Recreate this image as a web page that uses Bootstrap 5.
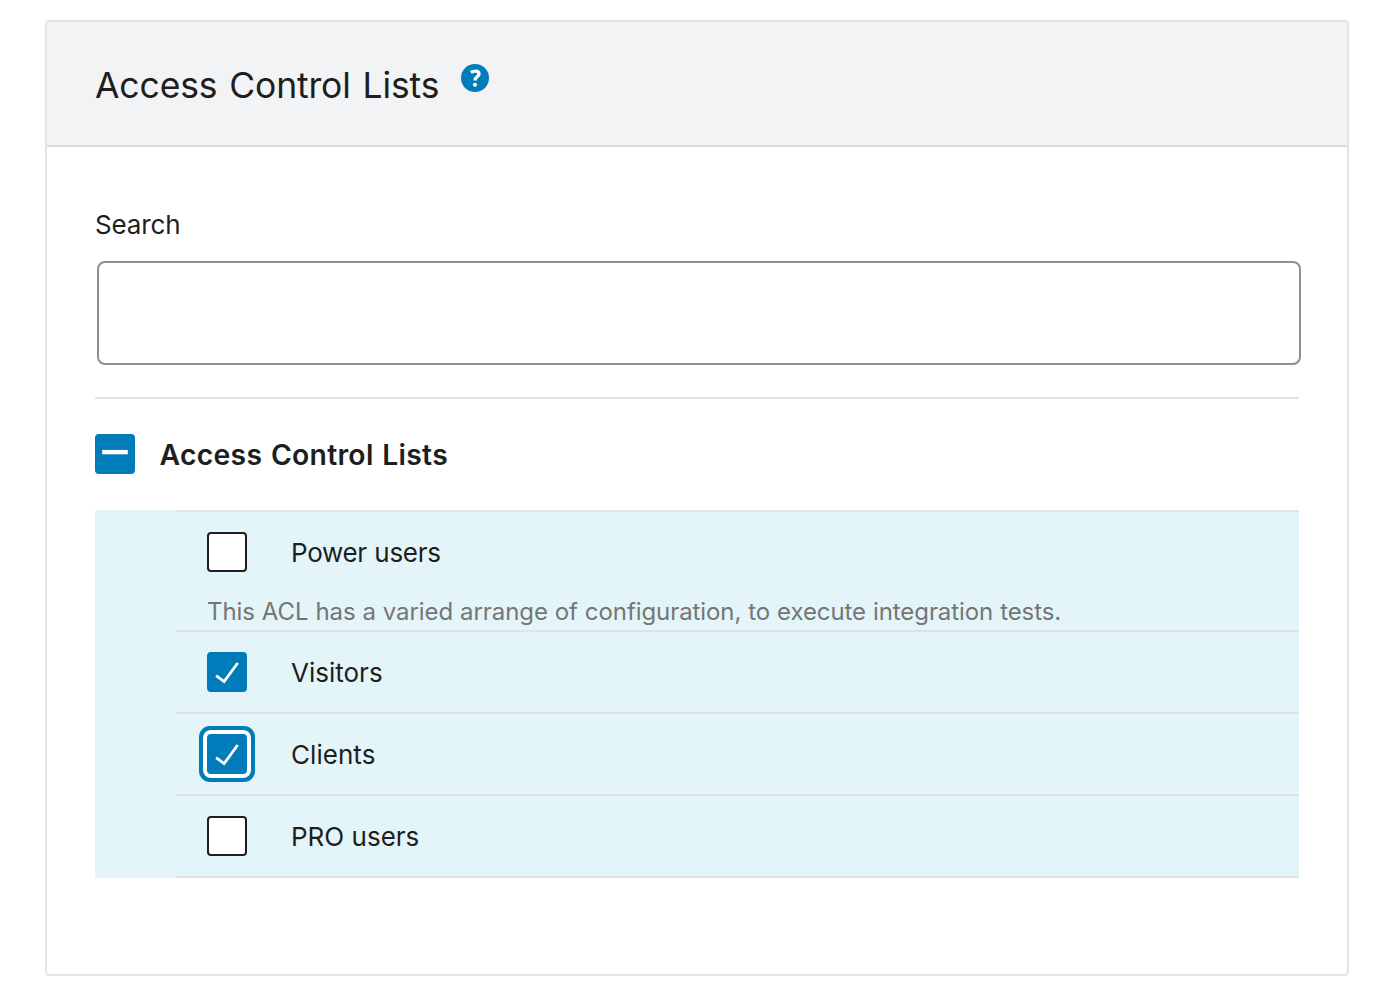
<!DOCTYPE html>
<html lang="en">
<head>
<meta charset="utf-8">
<meta name="viewport" content="width=device-width, initial-scale=1">
<title>Access Control Lists</title>
<link href="https://cdn.jsdelivr.net/npm/bootstrap@5.3.0/dist/css/bootstrap.min.css" rel="stylesheet">
<style>
  body { font-family: Inter, "Liberation Sans", sans-serif; color: #1e1e1e; background: #fff; padding: 20px 51px 0 45px; }
  .acl-card { height: 956px; border: 2px solid #e4e4e5; border-radius: 4px; }
  .acl-head { height: 125px; padding: 4px 0 0 48px; background: #f2f3f5; border-bottom: 2px solid #dadbdd; border-radius: 2px 2px 0 0; }
  .acl-title { font-size: 35.5px; font-weight: 400; line-height: 44px; letter-spacing: -.14px; word-spacing: 2px; }
  .help-icon { width: 28px; height: 28px; margin: 0 0 16px 22px; }
  .acl-body { padding: 58px 48px 0; }
  .search-label { font-size: 26px; line-height: 40px; letter-spacing: -.15px; }
  .search-box, .search-box:focus { width: 1204px; height: 104px; margin: 16px 0 0 2px; border: 2px solid #8c8f94; border-radius: 8px; box-shadow: none; }
  .group-row { height: 113px; margin-top: 32px; padding-top: 35px; border-top: 2px solid #e2e2e7; }
  .group-name { font-size: 28.3px; font-weight: 600; line-height: 42px; margin-left: 24.5px; letter-spacing: .3px; word-spacing: 1.2px; }
  .tick { width: 40px; height: 40px; flex: none; }
  .tick input { width: 40px; height: 40px; margin: 0; border: 2px solid #1e1e1e; border-radius: 4px; background: #fff; appearance: none; display: block; }
  .tick input.filled { background: #007cba; border-color: #007cba; }
  .tick input.ringed { box-shadow: 0 0 0 4px #fff, 0 0 0 8px #007cba; }
  .tick svg { left: 0; top: 0; pointer-events: none; }
  .acl-list { background: #e3f5f9; padding-left: 80px; }
  .acl-items { border-top: 2px solid #e2e2e6; }
  .acl-item { height: 82px; border-bottom: 2px solid #e2e2e6; padding: 20px 0 0 32px; }
  .acl-item.has-note { height: 120px; }
  .item-name { font-size: 26px; line-height: 42px; margin-left: 44px; letter-spacing: 0; }
  .item-name.snug { letter-spacing: -.3px; word-spacing: .5px; }
  .item-name.loose { letter-spacing: .05px; }
  .item-note { font-size: 24px; line-height: 38px; padding-top: 19px; color: #757575; letter-spacing: -.08px; word-spacing: .3px; white-space: nowrap; }
</style>
<script src="https://cdn.jsdelivr.net/npm/bootstrap@5.3.0/dist/js/bootstrap.bundle.min.js"></script>
</head>
<body>
<main class="acl-card">
  <header class="acl-head d-flex align-items-center">
    <h1 class="acl-title m-0">Access Control Lists</h1>
    <svg class="help-icon" viewBox="0 0 28 28" role="img" aria-label="Help">
      <circle cx="14" cy="14" r="14" fill="#007cba"/>
      <path d="M9.9 8.5Q12 7.1 14.3 7.1Q18 7.1 18 10Q18 11.6 16 12.9Q14.1 14.2 14.1 16.6" fill="none" stroke="#fff" stroke-width="3.4"/>
      <circle cx="14" cy="20.8" r="2.1" fill="#fff"/>
    </svg>
  </header>
  <section class="acl-body">
    <label class="search-label d-block" for="search">Search</label>
    <input class="search-box form-control" id="search" type="text">
    <div class="group-row d-flex align-items-start">
      <span class="tick position-relative">
        <input class="filled" type="checkbox" id="all">
        <svg class="position-absolute" width="40" height="40"><path d="M7.2 18.1H32.8" stroke="#fff" stroke-width="4.4"/></svg>
      </span>
      <label class="group-name" for="all">Access Control Lists</label>
    </div>
    <div class="acl-list">
      <div class="acl-items">
        <div class="acl-item has-note">
          <div class="d-flex">
            <span class="tick position-relative"><input type="checkbox" id="power"></span>
            <label class="item-name snug" for="power">Power users</label>
          </div>
          <div class="item-note">This ACL has a varied arrange of configuration, to execute integration tests.</div>
        </div>
        <div class="acl-item d-flex">
          <span class="tick position-relative">
            <input class="filled" type="checkbox" id="visitors" checked>
            <svg class="position-absolute" width="40" height="40"><path d="M9.1 23.7L17.1 29.6L30.7 11" fill="none" stroke="#fff" stroke-width="2.8"/></svg>
          </span>
          <label class="item-name" for="visitors">Visitors</label>
        </div>
        <div class="acl-item d-flex">
          <span class="tick position-relative">
            <input class="filled ringed" type="checkbox" id="clients" checked>
            <svg class="position-absolute" width="40" height="40"><path d="M9.1 23.7L17.1 29.6L30.7 11" fill="none" stroke="#fff" stroke-width="2.8"/></svg>
          </span>
          <label class="item-name loose" for="clients">Clients</label>
        </div>
        <div class="acl-item d-flex">
          <span class="tick position-relative"><input type="checkbox" id="pro"></span>
          <label class="item-name" for="pro">PRO users</label>
        </div>
      </div>
    </div>
  </section>
</main>
</body>
</html>
